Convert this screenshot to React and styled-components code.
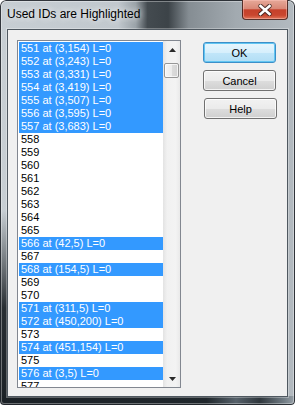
import styled, { createGlobalStyle } from "styled-components";

const GlobalStyle = createGlobalStyle`
  html, body {
    margin: 0;
    padding: 0;
    background: #ffffff;
  }
`;

const items = [
  { id: 551, at: "3,154" },
  { id: 552, at: "3,243" },
  { id: 553, at: "3,331" },
  { id: 554, at: "3,419" },
  { id: 555, at: "3,507" },
  { id: 556, at: "3,595" },
  { id: 557, at: "3,683" },
  { id: 558 },
  { id: 559 },
  { id: 560 },
  { id: 561 },
  { id: 562 },
  { id: 563 },
  { id: 564 },
  { id: 565 },
  { id: 566, at: "42,5" },
  { id: 567 },
  { id: 568, at: "154,5" },
  { id: 569 },
  { id: 570 },
  { id: 571, at: "311,5" },
  { id: 572, at: "450,200" },
  { id: 573 },
  { id: 574, at: "451,154" },
  { id: 575 },
  { id: 576, at: "3,5" },
  { id: 577 },
];

const App = () => (
  <>
    <GlobalStyle />
    <Window>
      <TitleBar>
        <Title>Used IDs are Highlighted</Title>
        <CloseButton aria-label="Close">
          <svg width="14" height="12" viewBox="0 0 14 12">
            <path d="M2.5 2 L11.5 10 M11.5 2 L2.5 10" stroke="#3a2420" strokeWidth="4.4" strokeLinecap="round" opacity="0.85" />
            <path d="M2.5 2 L11.5 10 M11.5 2 L2.5 10" stroke="#ffffff" strokeWidth="2.6" strokeLinecap="square" />
          </svg>
        </CloseButton>
      </TitleBar>
      <Client>
        <ListBox>
          <Items>
            {items.map((it) => (
              <Item key={it.id} $used={!!it.at}>
                {it.at ? `${it.id} at (${it.at}) L=0` : it.id}
              </Item>
            ))}
          </Items>
          <ScrollBar>
            <ArrowButton>
              <svg width="7" height="4" viewBox="0 0 7 4">
                <polygon points="3.5,0 7,4 0,4" fill="#2a2a2a" />
              </svg>
            </ArrowButton>
            <Track>
              <Thumb />
            </Track>
            <ArrowButton>
              <svg width="7" height="4" viewBox="0 0 7 4">
                <polygon points="0,0 7,0 3.5,4" fill="#2a2a2a" />
              </svg>
            </ArrowButton>
          </ScrollBar>
        </ListBox>
        <ButtonColumn>
          <Button $default>OK</Button>
          <Button>Cancel</Button>
          <Button $nudge={1}>Help</Button>
        </ButtonColumn>
      </Client>
    </Window>
  </>
);

export default App;

const Window = styled.div`
  width: 295px;
  height: 405px;
  box-sizing: border-box;
  display: flex;
  flex-direction: column;
  border-radius: 6px 6px 4px 4px;
  overflow: hidden;
  background:
    linear-gradient(180deg, rgba(24, 29, 33, 0) 0%, rgba(24, 29, 33, 0) 52%, rgba(24, 29, 33, 0.9) 76%, #1b2126 100%) left top / 8px 100% no-repeat,
    linear-gradient(90deg, #1b2126 0%, #20272c 70%, #56616a 80%, #2e363c 88%, #6f7a82 96%, #98a1a8 100%) left bottom / 100% 9px no-repeat,
    linear-gradient(90deg, #c7ced3 0%, #c1c8ce 40%, #9aa2a8 46%, #444b50 50%, #3c4348 57%, #858d93 64%, #a2aab0 80%, #b3bac0 100%);
  box-shadow: inset 0 0 0 1px rgba(20, 25, 30, 0.85), inset 0 0 0 2px rgba(255, 255, 255, 0.35);
`;

const TitleBar = styled.div`
  height: 29px;
  display: flex;
  align-items: flex-start;
`;

const Title = styled.div`
  flex: 1;
  padding-left: 7px;
  line-height: 29px;
  font-family: "Liberation Sans", Arial, sans-serif;
  font-size: 12px;
  color: #000;
  white-space: nowrap;
  text-shadow: 0 0 6px rgba(255, 255, 255, 0.8), 0 0 10px rgba(255, 255, 255, 0.6);
`;

const CloseButton = styled.div`
  width: 46px;
  height: 20px;
  margin-right: 7px;
  box-sizing: border-box;
  display: flex;
  align-items: center;
  justify-content: center;
  border: 1px solid rgba(60, 30, 26, 0.85);
  border-top: none;
  border-radius: 0 0 4px 4px;
  background: linear-gradient(180deg, #e6a999 0%, #d98877 45%, #c5412b 52%, #c9462f 80%, #e0765a 100%);
  box-shadow: inset 0 0 0 1px rgba(255, 200, 190, 0.45);
`;

const Client = styled.div`
  flex: 1;
  margin: 0 7px 8px;
  display: flex;
  align-items: flex-start;
  padding: 10px 0 0 9px;
  background: #f0f0f0;
  border: 1px solid #4f5860;
  box-shadow: 0 0 0 1px rgba(255, 255, 255, 0.3);
`;

const ListBox = styled.div`
  width: 164px;
  height: 348px;
  box-sizing: border-box;
  display: flex;
  border: 1px solid #828790;
  background: #fff;
`;

const Items = styled.ul`
  flex: 1;
  margin: 0;
  padding: 1px 0 1px 1px;
  list-style: none;
  overflow: hidden;
`;

const Item = styled.li`
  height: 13px;
  line-height: 13px;
  padding-left: 2px;
  font-family: "Liberation Sans", Arial, sans-serif;
  font-size: 11px;
  white-space: nowrap;
  color: ${(p) => (p.$used ? "#ffffff" : "#000000")};
  background: ${(p) => (p.$used ? "#3399ff" : "transparent")};
`;

const ScrollBar = styled.div`
  width: 17px;
  display: flex;
  flex-direction: column;
  background: linear-gradient(90deg, #e3e3e3 0%, #f1f1f1 25%, #f3f3f3 75%, #e9e9e9 100%);
`;

const ArrowButton = styled.div`
  height: 17px;
  display: flex;
  align-items: center;
  justify-content: center;
  padding-left: 1px;
`;

const Track = styled.div`
  flex: 1;
`;

const Thumb = styled.div`
  width: 15px;
  height: 15px;
  margin: 5px 0 0 1px;
  box-sizing: border-box;
  border: 1px solid #969696;
  border-radius: 2px;
  background: linear-gradient(90deg, #f6f6f6 0%, #ececec 50%, #dcdcdc 51%, #d3d3d3 100%);
  box-shadow: inset 0 0 0 1px rgba(255, 255, 255, 0.7);
`;

const ButtonColumn = styled.div`
  display: flex;
  flex-direction: column;
  align-items: flex-start;
  gap: 7px;
  margin: 2px 0 0 22px;
`;

const Button = styled.button`
  width: 73px;
  height: 21px;
  box-sizing: border-box;
  margin: 0 0 0 ${(p) => p.$nudge || 0}px;
  padding: 0;
  border-radius: 3px;
  font-family: "Liberation Sans", Arial, sans-serif;
  font-size: 11px;
  color: #000;
  border: 1px solid ${(p) => (p.$default ? "#3c8fc8" : "#707070")};
  background: ${(p) =>
    p.$default
      ? "linear-gradient(180deg, #e8f6fd 0%, #d6effc 50%, #c1e6f9 51%, #b2def5 100%)"
      : "linear-gradient(180deg, #f2f2f2 0%, #ebebeb 50%, #dddddd 51%, #cfcfcf 100%)"};
  box-shadow: ${(p) =>
    p.$default
      ? "inset 0 0 0 1px #62c6f2"
      : "inset 0 0 0 1px rgba(255, 255, 255, 0.75)"};
`;
